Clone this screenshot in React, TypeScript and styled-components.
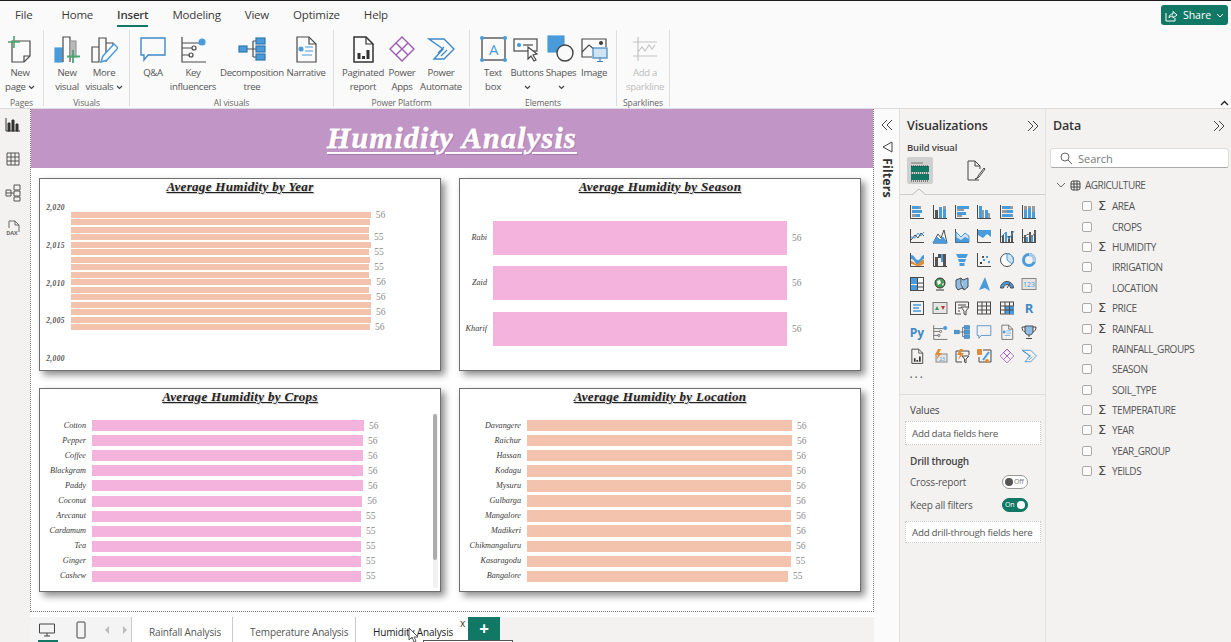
import React from "react";
import styled, { createGlobalStyle } from "styled-components";

const BLUE = "#4A9BDC";
const DARK = "#4a4a4a";
const GREEN = "#117865";
const SERIF = `"Liberation Serif", "DejaVu Serif", serif`;

const Global = createGlobalStyle`
  html, body { margin: 0; padding: 0; background: #fff; }
  body { font-family: "Open Sans", "Noto Sans", sans-serif; color: #333; }
  * { box-sizing: border-box; }
`;

const App_ = styled.div`
  position: relative; width: 1231px; height: 642px; overflow: hidden;
  display: flex; flex-direction: column; border-top: 1px solid #1c1c1c;
`;
const Header = styled.header`background: #fafafa; height: 108px; flex: none; border-bottom: 1px solid #dcdcdc; position: relative;`;
const TabStrip = styled.nav`display: flex; align-items: flex-start; height: 29px; padding: 5px 8px 0 15px; gap: 24px; font-size: 11.5px; letter-spacing: -.2px;`;
const MenuTab = styled.div<{ $active?: boolean; $file?: boolean }>`
  height: 21px; line-height: 18px; color: #3a3a3a; margin-right: ${p => (p.$file ? 5 : 0)}px;
  font-weight: ${p => (p.$active ? 600 : 400)};
  border-bottom: ${p => (p.$active ? `2px solid ${GREEN}` : "none")};
`;
const ShareButton = styled.button`
  margin-left: auto; width: 67px; height: 20px; background: ${GREEN}; color: #fff; border: 0; border-radius: 3px;
  display: flex; align-items: center; justify-content: center; gap: 5px; font: 400 10.5px "Open Sans", sans-serif; padding: 0; margin-right: -5px; margin-top: -1px;
`;
const Ribbon = styled.div`display: flex; height: 78px;`;
const Group = styled.section<{ $w: number; $pad?: number }>`
  width: ${p => p.$w}px; flex: none; padding-left: ${p => p.$pad ?? 6}px; border-right: 1px solid #dedede; height: 76px;
  display: flex; flex-direction: column; position: relative;
`;
const GroupItems = styled.div`display: flex; height: 63px;`;
const GroupLabel = styled.div`position: absolute; left: 0; right: 0; bottom: -3px; text-align: center; font-size: 8.5px; line-height: 12px; color: #666; letter-spacing: -.1px;`;
const RibbonItem = styled.div<{ $w: number; $off?: boolean }>`
  width: ${p => p.$w}px; flex: none; display: flex; flex-direction: column; align-items: center;
  font-size: 9.6px; line-height: 14px; letter-spacing: -.3px; text-align: center; white-space: nowrap; color: ${p => (p.$off ? "#bdbdbd" : "#555")};
`;
const RibbonIcon = styled.div`height: 28px; margin-top: 5px; margin-bottom: 3px; display: flex; align-items: center; justify-content: center;`;
const Collapse = styled.div`position: absolute; right: 2px; bottom: 2px; line-height: 0;`;

const Main = styled.main`display: flex; flex: 1; min-height: 0;`;
const Rail = styled.aside`width: 30px; flex: none; background: #f3f2f1; display: flex; flex-direction: column; align-items: center; padding: 8px 4px 0 0; gap: 17.500px;`;
const CanvasCol = styled.div`width: 844px; flex: none; display: flex; flex-direction: column; background: #fff;`;
const Page = styled.div`height: 503px; border: 1px dotted #777; border-top: 0; display: flex; flex-direction: column;`;
const Banner = styled.div`
  height: 59px; background: #c295c7; text-align: center; color: #fff; flex: none;
  font: italic 700 30px/57px ${SERIF}; letter-spacing: 1.3px; text-decoration: underline; text-decoration-thickness: 2px; text-underline-offset: 4px;
  -webkit-text-stroke: .35px #fff; text-shadow: 1px 1px 1px rgba(90,50,100,.3);
`;
const CardGrid = styled.div`display: grid; grid-template-columns: 402px 402px; grid-template-rows: 193px 204px; gap: 17px 18px; padding: 10px 0 0 8px;`;
const Card = styled.article`
  position: relative; background: #fff; border: 1px solid #6f6f6f; box-shadow: 4px 4px 7px rgba(0,0,0,.45); overflow: hidden;
`;
const CardTitle = styled.h3`
  margin: 0; height: 18px; text-align: center; font: italic 700 13px/15px ${SERIF}; color: #222; letter-spacing: .33px;
  text-decoration: underline; text-shadow: 1px 1px 1px rgba(0,0,0,.22);
`;
const YearBody = styled.div`display: flex;`;
const YearAxis = styled.div`
  width: 25px; margin-top: 6px; height: 161px; margin-right: 6px; display: flex; flex-direction: column; justify-content: space-between; align-items: flex-end;
  font: italic 700 7.5px/10px ${SERIF}; color: #555; letter-spacing: .4px;
`;
const Rows = styled.div<{ $top: number }>`padding-top: ${p => p.$top}px;`;
const Row = styled.div<{ $h: number }>`height: ${p => p.$h}px; display: flex; align-items: center;`;
const RowLabel = styled.div<{ $w: number }>`
  width: ${p => p.$w}px; flex: none; margin-right: 6px; text-align: right; white-space: nowrap;
  font: italic 400 8.2px/10px ${SERIF}; color: #3a3a3a;
`;
const Bar = styled.div<{ $h: number; $c: string }>`height: ${p => p.$h}px; background: ${p => p.$c}; flex: none;`;
const Val = styled.div`margin-left: 5px; font: 400 9.5px/10px ${SERIF}; color: #8a8a8a; white-space: nowrap;`;
const Scroll = styled.div`position: absolute; left: 393px; top: 25px; width: 5px; height: 174px; background: #f1f1f1; border-radius: 2px;`;
const ScrollThumb = styled.div`width: 4px; height: 146px; background: #adadad; border-radius: 2px;`;

const PageBar = styled.footer`height: 30px; padding-top: 5px; display: flex; font-size: 10px; position: relative;`;
const ViewSwitch = styled.div`width: 102px; flex: none; background: #f4f4f4; display: flex; align-items: center; padding-left: 8px; position: relative; border-right: 1px solid #ccc;`;
const ViewMark = styled.div`position: absolute; left: 8px; bottom: 0; width: 20px; height: 2px; background: ${GREEN};`;
const PageTab = styled.div<{ $w: number; $active?: boolean }>`
  width: ${p => p.$w}px; flex: none; padding: 8px 0 0 17px; border-right: ${p => (p.$active ? "none" : "1px solid #ccc")}; white-space: nowrap; letter-spacing: -.15px;
  color: ${p => (p.$active ? "#222" : "#555")};
`;
const TabClose = styled.span`position: absolute; left: 430px; top: 5px; font-size: 10px; line-height: 12px; color: #333;`;
const AddTab = styled.div`width: 32px; height: 23px; background: ${GREEN}; color: #fff; font: 700 17px/23px "Open Sans", sans-serif; text-align: center; flex: none;`;
const TabFill = styled.div`flex: 1; background: #f3f2f1;`;
const TipEdge = styled.div`position: absolute; left: 393px; bottom: 0; width: 90px; height: 2px; border: 1px solid #555; border-bottom: 0; background: #fff;`;
const Cursor = styled.svg`position: absolute; left: 378px; top: 15px;`;

const FilterStrip = styled.aside`width: 26px; flex: none; background: #fbfbfb; display: flex; flex-direction: column; align-items: center; padding-top: 10px; border-right: 1px solid #e1e1e1;`;
const FilterTitle = styled.div`writing-mode: vertical-rl; font-size: 12.5px; font-weight: 700; color: #333; margin-top: 5px; line-height: 14px; letter-spacing: .1px;`;
const FilterIconWrap = styled.div`margin-top: 10px; line-height: 0;`;
const VizPanel = styled.aside`width: 146px; flex: none; background: #f3f2f1; border-right: 1px solid #e1e1e1; display: flex; flex-direction: column;`;
const PanelHead = styled.div`height: 33px; display: flex; justify-content: space-between; align-items: center; padding: 0 6px 0 7px;`;
const PanelTitle = styled.div`font-size: 12.5px; font-weight: 600; color: #333; letter-spacing: -.15px;`;
const BuildLabel = styled.div`font-size: 9.5px; font-weight: 600; color: #444; padding-left: 7px; line-height: 13px; letter-spacing: -.2px; margin-top: -1px;`;
const BuildTabs = styled.div`height: 41px; display: flex; padding: 3px 0 0 7px; gap: 30px; border-bottom: 1px solid #cfcfcf; position: relative;`;
const BuildTab = styled.div<{ $active?: boolean }>`width: 26px; height: 27px; border-radius: 2px; background: ${p => (p.$active ? "#cfcfcf" : "transparent")}; display: flex; align-items: center; justify-content: center;`;
const Notch = styled.svg`position: absolute; left: 12px; bottom: -1px;`;
const Gallery = styled.div`display: grid; grid-template-columns: repeat(6, 22.4px); grid-auto-rows: 24px; padding: 5px 0 0 6px; height: 200px; border-bottom: 1px solid #dcdcdc; align-items: center; justify-items: center;`;
const More = styled.div`font-size: 12px; letter-spacing: 2px; color: #555; line-height: 10px; grid-column: 1; margin-top: -4px;`;
const FieldLabel = styled.div<{ $bold?: boolean; $t: number; $b: number }>`font-size: 10px; line-height: 14px; font-weight: ${p => (p.$bold ? 600 : 400)}; color: #444; padding-left: 10px; margin: ${p => p.$t}px 0 ${p => p.$b}px; letter-spacing: -.2px;`;
const DropWell = styled.div<{ $h: number; $t?: number }>`margin: ${p => p.$t ?? 0}px 5px 0; width: 136px; height: ${p => p.$h}px; background: #fff; border: 1px dotted #ccc; font-size: 9.8px; color: #555; display: flex; align-items: center; padding-left: 6px; letter-spacing: -.28px; white-space: nowrap;`;
const ToggleRow = styled.div`display: flex; justify-content: space-between; align-items: center; padding: 0 17px 0 10px; height: 23px; font-size: 10px; color: #555; letter-spacing: -.2px;`;
const Toggle = styled.div<{ $on?: boolean }>`
  width: 26px; height: 14px; border-radius: 7px; display: flex; align-items: center; gap: 1px; padding: 0 2px;
  font-size: 7px; flex-direction: ${p => (p.$on ? "row" : "row-reverse")}; justify-content: ${p => (p.$on ? "space-between" : "flex-end")};
  background: ${p => (p.$on ? GREEN : "#fff")}; color: ${p => (p.$on ? "#fff" : "#777")}; border: 1px solid ${p => (p.$on ? GREEN : "#999")};
`;
const Knob = styled.i<{ $on?: boolean }>`width: 8px; height: 8px; border-radius: 50%; background: ${p => (p.$on ? "#fff" : "#555")}; flex: none;`;

const DataPanel = styled.aside`flex: 1; background: #f3f2f1; display: flex; flex-direction: column;`;
const SearchBox = styled.div`margin: 6px 2px 0 4px; height: 20px; background: #fff; border: 1px solid #ddd; border-bottom-color: #aaa; border-radius: 3px; display: flex; align-items: center; gap: 6px; padding-left: 9px; font-size: 11px; color: #777;`;
const TreeRoot = styled.div`display: flex; align-items: center; height: 20px; margin-top: 7px; margin-bottom: 1px; padding-left: 10px; gap: 4px; font-size: 10px; color: #555; letter-spacing: -.5px;`;
const FieldRow = styled.div`display: flex; align-items: center; height: 20.4px; padding-left: 36px; font-size: 10px; color: #555; letter-spacing: -.45px;`;
const Check = styled.i`width: 10px; height: 10px; border: 1px solid #aaa; border-radius: 2px; background: #fafafa; flex: none;`;
const Sigma = styled.span`width: 12px; margin-left: 6px; margin-right: 2px; font: 400 13px/12px "DejaVu Sans", sans-serif; color: #444; flex: none;`;

/* ---------- icons ---------- */
type IP = { s?: number };
const I: React.FC<{ s?: number; v?: number; children: React.ReactNode }> = ({ s = 28, v = 28, children }) => (
  <svg width={s} height={s} viewBox={`0 0 ${v} ${v}`} fill="none" strokeWidth={v === 28 ? 1.2 : 1} stroke={DARK}>{children}</svg>
);
const NewPage = () => <I><path d="M6 6h18v15l-6 6H6z" /><path d="M24 21h-6v6" /><path d="M8 1v12M2 7h12" stroke="#4aa56f" strokeWidth="1.6" /></I>;
const NewVisual = () => <I><rect x="2" y="13" width="7" height="14" fill={BLUE} stroke={BLUE} /><path d="M10 27V2h7v25" /><rect x="17" y="6" width="6" height="16" fill="#b8b8b8" stroke="#999" /><path d="M20 15v13M14 21.500h13" stroke="#4aa56f" strokeWidth="1.8" /></I>;
const MoreVisuals = () => <I><path d="M2 27V12h7v15zM9 27V3h7v24M16 27V8h7v8" /><path d="M11 27l2-6L24 9l4 4-11 12z" fill="#fff" stroke={BLUE} strokeWidth="1.5" /></I>;
const QA: React.FC<IP> = ({ s }) => <I s={s}><path d="M2 3h24v17H9l-4 5v-5H2z" stroke="#3f88c5" strokeWidth="1.4" /></I>;
const KeyInf: React.FC<IP> = ({ s }) => <I s={s}><path d="M3 2v25h24M3 8h17M3 13h10M3 20h8" /><circle cx="23" cy="7" r="3" fill={BLUE} stroke={BLUE} /><circle cx="15" cy="13" r="2" /><circle cx="12" cy="20" r="2" /></I>;
const Decomp: React.FC<IP> = ({ s }) => <I s={s} ><path d="M9 14h6M15 6v16M15 6h3M15 14h3M15 22h3" /><g fill={BLUE} stroke="#3377aa"><rect x="1" y="11" width="8" height="6" /><rect x="18" y="3" width="9" height="6" /><rect x="18" y="11" width="9" height="6" /><rect x="18" y="19" width="9" height="6" /></g></I>;
const Narrative: React.FC<IP> = ({ s }) => <I s={s}><path d="M5 2h12l7 7v18H5z" /><path d="M17 2v7h7" /><circle cx="9" cy="14" r="2" fill={BLUE} stroke={BLUE} /><path d="M13 12h8M13 16h8M10 20h10" stroke={BLUE} /></I>;
const Paginated: React.FC<IP> = ({ s }) => <I s={s}><path d="M5 2h12l7 7v18H5z" strokeWidth="1.5" stroke="#333" /><path d="M17 2v7h7" stroke="#333" /><path d="M8.500 18h3v6h-3zM13 21h3v3h-3zM17.500 15h3v9h-3z" fill="#333" stroke="none" /></I>;
const PowerApps: React.FC<IP> = ({ s }) => <I s={s}><path d="M14 2l12 12-12 12L2 14z M8 8l12 12 M20 8L8 20 M14 2l6 6-6 6-6-6z" stroke="#9b59b6" strokeWidth="1.4" /></I>;
const Automate: React.FC<IP> = ({ s }) => <I s={s}><path d="M2 4h15l10 10-10 10H7l9-10z M2 4l14 10" stroke="#3f88c5" strokeWidth="1.4" /><path d="M11 18l6-6M14 21l6-6" stroke="#3f88c5" /></I>;
const TextBox = () => <I><rect x="3" y="3" width="23" height="22" stroke="#555" strokeWidth="1.4" /><g fill={BLUE} stroke="none"><circle cx="3" cy="3" r="2" /><circle cx="26" cy="3" r="2" /><circle cx="3" cy="25" r="2" /><circle cx="26" cy="25" r="2" /></g><text x="14.500" y="20" textAnchor="middle" fontFamily="Open Sans" fontSize="15" fill={BLUE} stroke="none">A</text></I>;
const Buttons = () => <I><rect x="1" y="4" width="23" height="12" /><circle cx="6" cy="10" r="1.500" fill={BLUE} stroke={BLUE} /><path d="M10 10h10" /><path d="M15 12l0 12 3-3 3 5 2-1-3-5 4-1z" fill="#fff" /></I>;
const Shapes = () => <I><rect x="1" y="1" width="16" height="16" fill={BLUE} stroke={BLUE} /><circle cx="18" cy="18" r="8" fill="#fafafa" stroke="#444" strokeWidth="1.4" /></I>;
const ImageIcon = () => <I><path d="M12 22H2V4h24v8" /><path d="M2 17l7-7 6 5" /><circle cx="21" cy="8" r="1.500" fill="#333" /><rect x="13" y="13" width="14" height="10" fill="#cfe3f2" stroke="#3f88c5" /><path d="M20 23v3M17 26.500h6" stroke="#3f88c5" /></I>;
const Spark = () => <I><g stroke="#c4c4c4"><path d="M7 2v24M2 7h24M2 21h24M7 17l4-5 3 4 4-6 3 4 3-4" /></g></I>;
const Chev = () => <svg width="7" height="5" viewBox="0 0 7 5" fill="none" stroke="#444" strokeWidth="1.2"><path d="M1 1l2.500 2.500L6 1" /></svg>;
const DoubleL = () => <svg width="12" height="12" viewBox="0 0 12 12" fill="none" stroke="#444"><path d="M6 1L1 6l5 5M11 1L6 6l5 5" /></svg>;
const DoubleR = () => <svg width="12" height="12" viewBox="0 0 12 12" fill="none" stroke="#444"><path d="M1 1l5 5-5 5M6 1l5 5-5 5" /></svg>;
const ShareIco = () => <svg width="13" height="13" viewBox="0 0 13 13" fill="none" stroke="#fff"><path d="M1 4v8h9V9M4 9c0-3 2-4 4-4V2.500L12 6 8 9V7C6 7 5 8 4 9z" /></svg>;

const Bars: React.FC<{ d: [number, number, number, number, string][] }> = ({ d }) => <>{d.map((r, i) => <rect key={i} x={r[0]} y={r[1]} width={r[2]} height={r[3]} fill={r[4]} stroke="none" />)}</>;
const G = "#9a9a9a", D2 = "#555";
const Ax = () => <path d="M1.500 1v13.500H15" stroke={DARK} />;
const T: React.FC<{ x: number; y: number; z: number; c?: string; b?: boolean; children: React.ReactNode }> = ({ x, y, z, c = BLUE, b, children }) => (
  <text x={x} y={y} fontSize={z} fontWeight={b ? 700 : 400} fill={c} stroke="none" fontFamily="Open Sans" textAnchor="middle">{children}</text>
);
const g = (n: React.ReactNode) => <I s={16} v={16}>{n}</I>;
const gs = (C: React.FC<IP>) => <C s={16} />;

const galleryIcons: React.ReactNode[] = [
  g(<><Ax /><Bars d={[[3,2,7,3,BLUE],[10,2,2,3,G],[3,6,10,3,BLUE],[3,10,4,3,G],[7,10,4,3,BLUE]]} /></>),
  g(<><Ax /><Bars d={[[3,6,3,8,D2],[7,3,3,11,BLUE],[11,5,3,9,BLUE],[11,2,3,3,G]]} /></>),
  g(<><Ax /><Bars d={[[3,2,12,3,BLUE],[3,5,7,2,G],[3,8,9,3,BLUE],[3,11,5,2,G]]} /></>),
  g(<><Ax /><Bars d={[[3,2,3,12,BLUE],[6,6,2,8,G],[9,6,3,8,BLUE],[12,9,2,5,G]]} /></>),
  g(<><Ax /><Bars d={[[3,2,8,3,BLUE],[11,2,3,3,G],[3,6,5,3,G],[8,6,6,3,BLUE],[3,10,10,3,BLUE],[13,10,1,3,G]]} /></>),
  g(<><Ax /><Bars d={[[3,6,3,8,BLUE],[3,2,3,4,G],[7,4,3,10,BLUE],[7,2,3,2,G],[11,8,3,6,BLUE],[11,2,3,6,G]]} /></>),
  g(<><Ax /><path d="M2 12l4-5 3 3 3-5 3 3" stroke={DARK} /><path d="M2 9l4 1 3-5 3 3 3-4" stroke={BLUE} /></>),
  g(<><path d="M1 15l5-9 3 4 3-8 3 13z" fill="#fff" /><path d="M1 15l4-6 3 3 3-3 4 6z" fill={BLUE} stroke={BLUE} /></>),
  g(<><Ax /><path d="M2 4l5 5 4-4 4 3v6H2z" fill="#cfe3f2" stroke={BLUE} /><path d="M2 9l5 3 4-3 4 2v3H2z" fill={BLUE} stroke="none" /></>),
  g(<><Ax /><path d="M2 2h13v7l-4-3-4 4-5-3z" fill={BLUE} stroke="none" /></>),
  g(<><Ax /><Bars d={[[3,7,2,7,D2],[6,4,2,10,BLUE],[9,8,2,6,D2],[12,3,2,11,D2]]} /><path d="M2 9l4-4 4 6 5-8" stroke={BLUE} /></>),
  g(<><Ax /><Bars d={[[3,7,2,7,D2],[5,9,2,5,BLUE],[8,4,2,10,D2],[10,7,2,7,BLUE],[13,2,2,12,D2]]} /><path d="M2 10l5-4 4 3 4-6" stroke="#777" /></>),
  g(<><Ax /><path d="M2 3c4 0 4 5 7 5s3-5 6-5v4c-3 0-3 6-6 6s-3-6-7-6z" fill={BLUE} stroke="none" /><path d="M2 9c3 0 3 3 6 3s4-5 7-4v4c-3 1-3 2-6 2s-4-2-7-2z" fill="#e08b35" stroke="none" /></>),
  g(<><Ax /><Bars d={[[3,5,3,9,D2],[6,2,3,4,D2],[9,2,2,8,BLUE],[11,2,3,12,D2]]} /></>),
  g(<path d="M2 2h12l-2 4H4zM4 7h8l-1 3H5zM5.500 11h5v3h-5z" fill={BLUE} stroke="none" />),
  g(<><Ax /><Bars d={[[4,10,2,2,"#333"],[7,7,2,2,BLUE],[10,4,2,2,BLUE],[6,4,2,2,"#555"],[12,9,2,2,BLUE]]} /></>),
  g(<><circle cx="8" cy="8" r="6.500" fill="#fff" stroke={DARK} /><path d="M8 8V1.500A6.500 6.500 0 0 1 13 12z" fill="#cfe3f2" stroke={BLUE} /></>),
  g(<><circle cx="8" cy="8" r="5.500" stroke={BLUE} strokeWidth="3" /><path d="M8 2.500A5.500 5.500 0 0 1 13 10" stroke="#a9cbe8" strokeWidth="3" /></>),
  g(<><rect x="1.500" y="1.500" width="13" height="13" /><Bars d={[[2,2,6,6,BLUE],[2,9,6,5,BLUE],[9,2,5,4,"#fff"]]} /><path d="M8.500 2v12M9 7h5M9 11h5" /></>),
  g(<><circle cx="8" cy="7" r="5" fill="#4c9a5a" stroke="#333" /><path d="M5 5l3-1 1 3-3 2zM10 8l2-1-1 3z" fill="#fff" stroke="none" /><path d="M4 14h8" stroke="#333" /></>),
  g(<path d="M2 4l5-2 2 2 5-2v9l-4 3-2-2-4 2-2-3z M7 2v6l3 6" fill="#8ebde6" stroke={DARK} />),
  g(<path d="M9 1l5 14-5-3-6 2z" fill={BLUE} stroke="none" />),
  g(<><path d="M1.500 12a6.500 6.500 0 0 1 13 0h-3a3.500 3.500 0 0 0-7 0z" fill={BLUE} stroke={DARK} /><path d="M8 12l3-5" stroke={DARK} /></>),
  g(<><rect x="1" y="2.500" width="14" height="11" fill="#e5e5e5" stroke="#888" /><T x={8} y={11} z={7}>123</T></>),
  g(<><rect x="1.500" y="1.500" width="13" height="13" /><path d="M4 5h8M4 8h6M4 11h8" stroke={BLUE} strokeWidth="1.300" /></>),
  g(<><rect x="1" y="2.500" width="14" height="11" fill="#e5e5e5" stroke="#777" /><path d="M3 10l2-4 2 4z" fill="#3f9a5a" stroke="none" /><path d="M9 6h4l-2 4z" fill="#c0392b" stroke="none" /></>),
  g(<><path d="M7 14H1.500V2h13v5M4 5h8M4 8h3M4 11h2" /><path d="M7 7h8l-3 4v4l-2-1v-3z" fill="#f3f2f1" /></>),
  g(<><rect x="1.500" y="2" width="13" height="12" /><path d="M1.500 6h13M1.500 10h13M6 2v12M10.500 2v12" /></>),
  g(<><rect x="1.500" y="2" width="13" height="12" /><Bars d={[[6,6,9,8,BLUE]]} /><path d="M1.500 6h13M1.500 10h13M6 2v12M10.500 2v12" /></>),
  g(<T x={8} y={12.500} z={13} b c="#3f88c5">R</T>),
  g(<T x={8} y={12.500} z={12} b c="#3f88c5">Py</T>),
  gs(KeyInf), gs(Decomp), gs(QA), gs(Narrative),
  g(<><path d="M4 2h8v5c0 3-2 4-4 4s-4-1-4-4z" fill="#8ebde6" /><path d="M4 3H1c0 3 1 4 3 5M12 3h3c0 3-1 4-3 5M8 11v2M5 14.500h6" /></>),
  gs(Paginated),
  g(<><rect x="4" y="6" width="11" height="8" fill="#e5e5e5" stroke="#888" /><path d="M6 1L3 7h3l-2 5 6-7H7l2-4z" fill="#e08b35" stroke="none" /><T x={10} y={12.500} z={5}>23</T></>),
  g(<><path d="M8 14H2V3h13v4" /><path d="M6 1L3 7h3l-2 5 6-7H7l2-4z" fill="#e08b35" stroke="none" /><path d="M8 8h7l-3 3v4l-1.500-1v-3z" fill="#f3f2f1" /></>),
  g(<><path d="M7 2h8v12H3V9" /><path d="M7 12l6-8" stroke={BLUE} strokeWidth="2" /><rect x="1" y="1" width="5" height="6" rx="1" fill="#e08b35" stroke="none" /><circle cx="11" cy="13" r="2" fill="#e08b35" stroke="none" /></>),
  gs(PowerApps), gs(Automate),
];
const MiniField = () => (
  <svg width="20" height="22" viewBox="0 0 20 22" fill="none"><path d="M1 3h12" stroke="#777" /><g fill={GREEN}><rect x="1" y="6" width="18" height="6" /><rect x="1" y="14" width="18" height="6" /></g><path d="M1 13h18M1 6h18M1 21h18" stroke="#333" strokeDasharray="1 1" /></svg>
);
const BrushPage = () => (
  <svg width="20" height="22" viewBox="0 0 20 22" fill="none" stroke="#444"><path d="M13 20H2V1h7l5 5v3M9 1v5h5" /><path d="M9 19c2 0 3-1 3-3l6-8 1 1-6 8-4 2z" fill="#fff" /></svg>
);
const RailIcons = [
  <svg key="a" width="16" height="16" viewBox="0 0 16 16" fill="none" stroke="#333"><path d="M1 1v13h14" /><path d="M3 6h2v8H3zM7 3h2v11H7zM11 7h2v7h-2z" fill="#333" /></svg>,
  <svg key="b" width="16" height="16" viewBox="0 0 16 16" fill="none" stroke="#555"><path d="M2 2h12v12H2zM2 6h12M2 10h12M6 2v12M10 2v12" /></svg>,
  <svg key="c" width="16" height="18" viewBox="0 0 16 18" fill="none" stroke="#555"><path d="M1 6h5v6H1zM9 1h6v5H9zM9 7h6v5H9zM9 13h6v4H9zM6 9h3M1 9h5" /></svg>,
  <svg key="d" width="16" height="17" viewBox="0 0 16 17" fill="none" stroke="#666"><path d="M4 8V1h6l4 4v7" /><path d="M10 1v4h4" /><text x="7" y="15" fontFamily="Open Sans" fontSize="5.500" fontWeight="700" fill="#666" stroke="none" textAnchor="middle">DAX</text></svg>,
];

/* ---------- data ---------- */
const PEACH = "#f4c3ae", PINK = "#f4b3dc";
const yearW: [number, string?][] = [[299.7,"56"],[298.7],[298.3],[298,"55"],[299.7],[298.3,"55"],[299.3],[298.3,"55"],[298.3],[300.3,"56"],[298.3],[300,"56"],[299.7],[300,"56"],[299.7],[299,"56"]];
const crops: [string, number, string][] = [["Cotton",272,"56"],["Pepper",271,"56"],["Coffee",271,"56"],["Blackgram",271,"56"],["Paddy",271,"56"],["Coconut",270.3,"56"],["Arecanut",269,"55"],["Cardamum",269,"55"],["Tea",269,"55"],["Ginger",269,"55"],["Cashew",269,"55"]];
const locs: [string, number, string][] = [["Davangere",265,"56"],["Raichur",265,"56"],["Hassan",264.5,"56"],["Kodagu",264.5,"56"],["Mysuru",264.3,"56"],["Gulbarga",264.3,"56"],["Mangalore",264.3,"56"],["Madikeri",264.3,"56"],["Chikmangaluru",264,"56"],["Kasaragodu",263.7,"55"],["Bangalore",261,"55"]];
const seasons: [string, number, string][] = [["Rabi",294,"56"],["Zaid",294,"56"],["Kharif",294,"56"]];
const fields: [string, boolean][] = [["AREA",true],["CROPS",false],["HUMIDITY",true],["IRRIGATION",false],["LOCATION",false],["PRICE",true],["RAINFALL",true],["RAINFALL_GROUPS",false],["SEASON",false],["SOIL_TYPE",false],["TEMPERATURE",true],["YEAR",true],["YEAR_GROUP",false],["YEILDS",true]];
const ribbon: { w: number; pad?: number; label: string; items: { w: number; icon: React.ReactNode; l: string[]; chev?: boolean; off?: boolean }[] }[] = [
  { w: 44, pad: 0, label: "Pages", items: [{ w: 40, icon: <NewPage />, l: ["New", "page"], chev: true }] },
  { w: 86, pad: 4, label: "Visuals", items: [{ w: 38, icon: <NewVisual />, l: ["New", "visual"] }, { w: 36, icon: <MoreVisuals />, l: ["More", "visuals"], chev: true }] },
  { w: 204, label: "AI visuals", items: [{ w: 34, icon: <QA />, l: ["Q&A"] }, { w: 46, icon: <KeyInf />, l: ["Key", "influencers"] }, { w: 72, icon: <Decomp />, l: ["Decomposition", "tree"] }, { w: 36, icon: <Narrative />, l: ["Narrative"] }] },
  { w: 136, label: "Power Platform", items: [{ w: 46, icon: <Paginated />, l: ["Paginated", "report"] }, { w: 32, icon: <PowerApps />, l: ["Power", "Apps"] }, { w: 46, icon: <Automate />, l: ["Power", "Automate"] }] },
  { w: 147, label: "Elements", items: [{ w: 34, icon: <TextBox />, l: ["Text", "box"] }, { w: 34, icon: <Buttons />, l: ["Buttons", ""], chev: true }, { w: 34, icon: <Shapes />, l: ["Shapes", ""], chev: true }, { w: 32, icon: <ImageIcon />, l: ["Image"] }] },
  { w: 53, label: "Sparklines", items: [{ w: 44, icon: <Spark />, l: ["Add a", "sparkline"], off: true }] },
];

const HBars: React.FC<{ rows: [string, number, string][]; lw: number; h: number; bh: number; top: number; c: string }> = ({ rows, lw, h, bh, top, c }) => (
  <Rows $top={top}>
    {rows.map(([n, w, v]) => (
      <Row key={n} $h={h}>
        <RowLabel $w={lw}>{n}</RowLabel>
        <Bar $h={bh} $c={c} style={{ width: w }} />
        <Val>{v}</Val>
      </Row>
    ))}
  </Rows>
);

export default function App() {
  return (
    <App_>
      <Global />
      <Header>
        <TabStrip>
          <MenuTab $file>File</MenuTab>
          <MenuTab>Home</MenuTab>
          <MenuTab $active>Insert</MenuTab>
          <MenuTab>Modeling</MenuTab>
          <MenuTab>View</MenuTab>
          <MenuTab>Optimize</MenuTab>
          <MenuTab>Help</MenuTab>
          <ShareButton><ShareIco />Share<svg width="8" height="5" viewBox="0 0 8 5" fill="none" stroke="#fff"><path d="M1 1l3 3 3-3" /></svg></ShareButton>
        </TabStrip>
        <Ribbon>
          {ribbon.map(g0 => (
            <Group key={g0.label} $w={g0.w} $pad={g0.pad}>
              <GroupItems>
                {g0.items.map(it => (
                  <RibbonItem key={it.l.join()} $w={it.w} $off={it.off}>
                    <RibbonIcon>{it.icon}</RibbonIcon>
                    <span>{it.l[0]}</span>
                    {it.l[1] !== undefined && <span>{it.l[1]}{it.chev && <> <Chev /></>}</span>}
                  </RibbonItem>
                ))}
              </GroupItems>
              <GroupLabel>{g0.label}</GroupLabel>
            </Group>
          ))}
        </Ribbon>
        <Collapse><svg width="9" height="6" viewBox="0 0 9 6" fill="none" stroke="#222" strokeWidth="1.4"><path d="M1 5l3.500-3.500L8 5" /></svg></Collapse>
      </Header>
      <Main>
        <Rail>{RailIcons}</Rail>
        <CanvasCol>
          <Page>
            <Banner>Humidity Analysis</Banner>
            <CardGrid>
              <Card>
                <CardTitle>Average Humidity by Year</CardTitle>
                <YearBody>
                  <YearAxis><span>2,020</span><span>2,015</span><span>2,010</span><span>2,005</span><span>2,000</span></YearAxis>
                  <Rows $top={14}>
                    {yearW.map(([w, v], i) => (
                      <Row key={i} $h={7.5}>
                        <Bar $h={6.2} $c={PEACH} style={{ width: w }} />
                        {v && <Val>{v}</Val>}
                      </Row>
                    ))}
                  </Rows>
                </YearBody>
              </Card>
              <Card>
                <CardTitle>Average Humidity by Season</CardTitle>
                <HBars rows={seasons} lw={27} h={45.5} bh={34} top={18} c={PINK} />
              </Card>
              <Card>
                <CardTitle>Average Humidity by Crops</CardTitle>
                <HBars rows={crops} lw={46} h={15.1} bh={11} top={11} c={PINK} />
                <Scroll><ScrollThumb /></Scroll>
              </Card>
              <Card>
                <CardTitle>Average Humidity by Location</CardTitle>
                <HBars rows={locs} lw={61} h={15.1} bh={11.5} top={11} c={PEACH} />
              </Card>
            </CardGrid>
          </Page>
          <PageBar>
            <ViewSwitch>
              <svg width="18" height="16" viewBox="0 0 18 16" fill="none" stroke="#444"><path d="M1.500 2h15v9h-15zM6 14h6M9 11v3" /></svg>
              <svg style={{ marginLeft: 20 }} width="10" height="18" viewBox="0 0 10 18" fill="none" stroke="#444"><rect x="1" y="1" width="8" height="16" rx="1" /></svg>
              <svg style={{ marginLeft: 19 }} width="24" height="8" viewBox="0 0 24 8" fill="#bbb"><path d="M4 0v8L0 4zM18 0v8l4-4z" /></svg>
              <ViewMark />
            </ViewSwitch>
            <PageTab $w={101}>Rainfall Analysis</PageTab>
            <PageTab $w={123}>Temperature Analysis</PageTab>
            <PageTab $w={112} $active>Humidity Analysis</PageTab>
            <TabClose>x</TabClose>
            <AddTab>+</AddTab>
            <TabFill />
            <TipEdge />
            <Cursor width="12" height="16" viewBox="0 0 12 16"><path d="M1 1v12l3-3 2 5 2-1-2-4h4z" fill="#fff" stroke="#555" /></Cursor>
          </PageBar>
        </CanvasCol>
        <FilterStrip>
          <DoubleL />
          <FilterIconWrap><svg width="12" height="12" viewBox="0 0 12 12" fill="none" stroke="#444"><path d="M11 1v10L2 6z" /></svg></FilterIconWrap>
          <FilterTitle>Filters</FilterTitle>
        </FilterStrip>
        <VizPanel>
          <PanelHead><PanelTitle>Visualizations</PanelTitle><DoubleR /></PanelHead>
          <BuildLabel>Build visual</BuildLabel>
          <BuildTabs>
            <BuildTab $active><MiniField /></BuildTab>
            <BuildTab><BrushPage /></BuildTab>
            <Notch width="14" height="7" viewBox="0 0 14 7" fill="#f3f2f1" stroke="#bbb"><path d="M0 7l7-6 7 6" /></Notch>
          </BuildTabs>
          <Gallery>
            {galleryIcons.map((n, i) => <React.Fragment key={i}>{n}</React.Fragment>)}
            <More>···</More>
          </Gallery>
          <FieldLabel $t={8} $b={4}>Values</FieldLabel>
          <DropWell $h={24}>Add data fields here</DropWell>
          <FieldLabel $bold $t={9} $b={2}>Drill through</FieldLabel>
          <ToggleRow>Cross-report<Toggle><span>Off</span><Knob /></Toggle></ToggleRow>
          <ToggleRow>Keep all filters<Toggle $on><span>On</span><Knob $on /></Toggle></ToggleRow>
          <DropWell $h={22} $t={5}>Add drill-through fields here</DropWell>
        </VizPanel>
        <DataPanel>
          <PanelHead><PanelTitle>Data</PanelTitle><DoubleR /></PanelHead>
          <SearchBox>
            <svg width="12" height="12" viewBox="0 0 12 12" fill="none" stroke="#666"><circle cx="5" cy="5" r="4" /><path d="M8 8l4 4" /></svg>
            Search
          </SearchBox>
          <TreeRoot>
            <svg width="10" height="6" viewBox="0 0 10 6" fill="none" stroke="#666"><path d="M1 1l4 4 4-4" /></svg>
            <svg width="11" height="11" viewBox="0 0 11 11" fill="none" stroke="#444"><rect x="1" y="1" width="9" height="9" rx="2" /><path d="M1 4h9M1 7h9M4 1v9M7 1v9" /></svg>
            AGRICULTURE
          </TreeRoot>
          {fields.map(([f, s]) => (
            <FieldRow key={f}><Check /><Sigma>{s ? "Σ" : ""}</Sigma>{f}</FieldRow>
          ))}
        </DataPanel>
      </Main>
    </App_>
  );
}
